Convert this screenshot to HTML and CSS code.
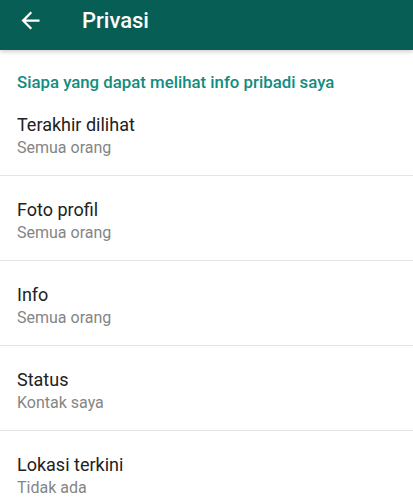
FILE: index.html
```html
<!DOCTYPE html>
<html lang="id">
<head>
  <meta charset="UTF-8" />
  <title>Privasi</title>
  <link rel="stylesheet" href="styles.css">
</head>
<body>

<div class="app-bar">
  <button type="button" class="back-btn" aria-label="Kembali">
    <svg viewBox="0 0 24 24" width="27" height="27">
      <path d="M20 11H7.83l5.59-5.59L12 4l-8 8 8 8 1.41-1.41L7.83 13H20v-2z" fill="#fff"/>
    </svg>
  </button>
  <h1 class="app-title">Privasi</h1>
</div>

<div class="settings">
  <div class="section-title">Siapa yang dapat melihat info pribadi saya</div>
  <div class="setting-item">
    <div class="setting-name">Terakhir dilihat</div>
    <div class="setting-value">Semua orang</div>
  </div>
  <div class="setting-item">
    <div class="setting-name">Foto profil</div>
    <div class="setting-value">Semua orang</div>
  </div>
  <div class="setting-item">
    <div class="setting-name">Info</div>
    <div class="setting-value">Semua orang</div>
  </div>
  <div class="setting-item">
    <div class="setting-name">Status</div>
    <div class="setting-value">Kontak saya</div>
  </div>
  <div class="setting-item">
    <div class="setting-name">Lokasi terkini</div>
    <div class="setting-value">Tidak ada</div>
  </div>
</div>

</body>
</html>
```

FILE: styles.css
```css
body {
  font-family: Roboto, "Noto Sans", Arial, sans-serif;
  background: #fff;
  margin: 0;
  overflow: hidden;
}
.app-bar {
  display: flex;
  align-items: center;
  height: 41px;
  padding-bottom: 9px;
  background-color: #075e54;
  box-shadow: 0 2px 4px rgba(0,0,0,0.18);
  position: relative;
}
.back-btn {
  display: flex;
  margin: 0 0 0 17px;
  padding: 0;
  border: none;
  background: none;
  cursor: pointer;
}
.app-title {
  margin: 0 0 0 38px;
  font-size: 22px;
  font-weight: 500;
  color: #fff;
}
.section-title {
  padding: 23px 17px 0;
  font-size: 16.8px;
  line-height: 18px;
  font-weight: 500;
  color: #128c7e;
}
.setting-item {
  padding: 21px 17px 16px;
  border-bottom: 1px solid #e4e4e4;
}
.setting-item:last-child {
  border-bottom: none;
}
.setting-name {
  font-size: 18px;
  line-height: 25px;
  color: #212121;
}
.setting-value {
  font-size: 16px;
  line-height: 22px;
  color: #858585;
}
```
